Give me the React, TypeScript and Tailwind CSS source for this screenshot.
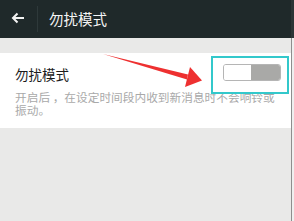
import React from 'react'

const cjk = { fontFamily: '"Noto Sans CJK SC", "Noto Sans", sans-serif' }

export default function App() {
  return (
    <div className="relative flex h-[221px] w-[294px] overflow-hidden bg-[#e9e9e8]" style={cjk}>
      <div className="flex w-[291px] flex-col">
        {/* top bar */}
        <div className="flex h-[38px] items-center bg-[#1f292a] pl-[11px]">
          <svg width="14" height="12" viewBox="0 0 14 12" className="mt-[-3px]">
            <path d="M13 6H2M6.5 1.5L2 6l4.5 4.5" fill="none" stroke="#f2f2f2" strokeWidth="2" />
          </svg>
          <div className="ml-[12px] h-[26px] w-px bg-[#2e393a]" />
          <span className="ml-[11px] text-[14.5px] leading-none text-[#f4f4f4]">勿扰模式</span>
        </div>

        <div className="h-[15px]" />

        {/* setting card */}
        <div className="relative bg-white pb-[12px] pl-[15px] pr-[10px] pt-[11px]">
          <div className="flex items-start justify-between">
            <span className="text-[13.5px] leading-[20px] text-[#1c1c1c]">勿扰模式</span>
            <div className="flex h-[17px] w-[58px] overflow-hidden rounded-[3px] border border-[#b5b5b5]">
              <div className="flex-1 bg-white" />
              <div className="w-[29px] bg-[#a9a9a7]" />
            </div>
          </div>
          <p className="mt-[6px] w-[265px] text-[11.7px] leading-[13px] text-[#a9a9a9]">
            开启后 ，在设定时间段内收到新消息时不会响铃或振动。
          </p>

          {/* highlight box */}
          <div className="absolute left-[211px] top-[3px] h-[38px] w-[78px] border-2 border-[#33c8cb]" />
        </div>
      </div>

      {/* right edge strip */}
      <div className="flex w-[3px] flex-col">
        <div className="h-[38px] bg-[#2b3536]" />
        <div className="flex-1 border-l border-[#8e8e8e] bg-[#efefef]" />
      </div>

      {/* red annotation arrow */}
      <svg className="pointer-events-none absolute left-0 top-0" width="294" height="221" viewBox="0 0 294 221">
        <polygon points="103,54 188,74.5 187,79.5" fill="#ee3030" />
        <polygon points="190,67 202,80.5 185,87" fill="#ee3030" />
      </svg>
    </div>
  )
}
